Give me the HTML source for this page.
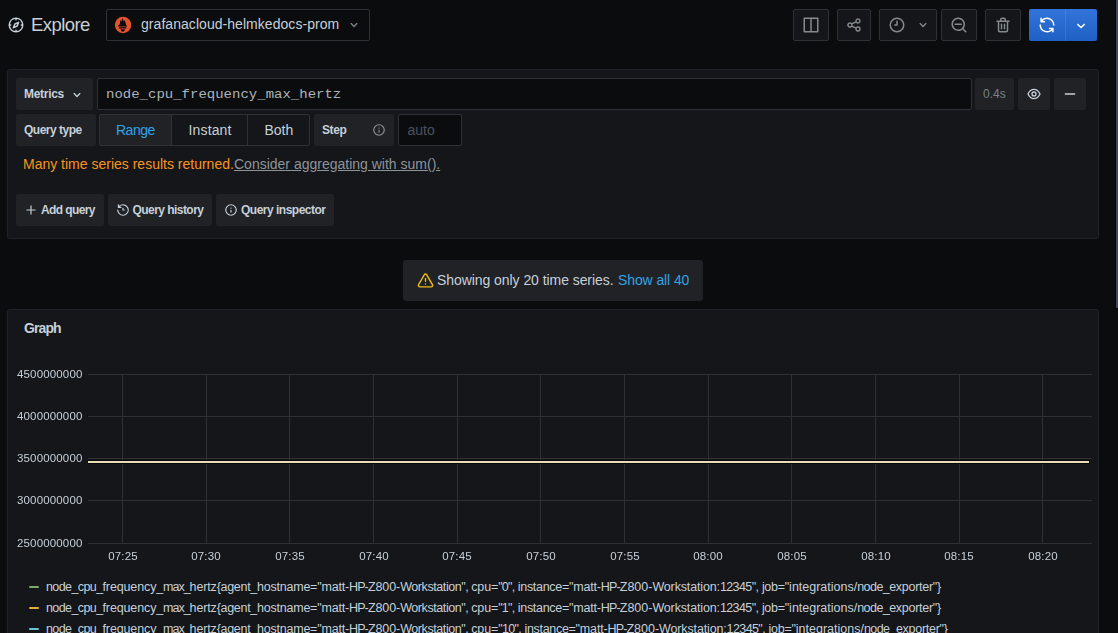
<!DOCTYPE html>
<html>
<head>
<meta charset="utf-8">
<title>Explore - Grafana</title>
<style>
*{box-sizing:border-box;margin:0;padding:0}
html,body{width:1118px;height:633px;overflow:hidden;background:#0b0c0e;color:#c7d0d9;font-family:"Liberation Sans",sans-serif;font-size:14px}
.abs{position:absolute}
#root{position:relative;width:1118px;height:633px;overflow:hidden}
.tbtn{position:absolute;top:9px;height:32px;background:#141619;border:1px solid #2f3135;border-radius:2px}
.panel{position:absolute;background:#141619;border:1px solid #202226;border-radius:3px}
.lbl{position:absolute;height:32px;background:#202226;border-radius:2px}
.inp{position:absolute;height:32px;background:#0b0c0e;border:1px solid #2c3235;border-radius:2px}
.txt{position:absolute;white-space:nowrap;line-height:1}
.b{font-weight:bold}
.ylab{position:absolute;left:10px;width:72.5px;text-align:right;font-size:11.5px;line-height:12px;color:#c7d0d9;white-space:nowrap;letter-spacing:0.15px;will-change:transform}
.xlab{position:absolute;top:550px;width:60px;text-align:center;font-size:11.5px;line-height:12px;color:#c7d0d9;white-space:nowrap;letter-spacing:0.1px;will-change:transform}
.leg{position:absolute;left:46px;width:910px;height:14px;font-size:12.5px;line-height:14px;color:#c7d0d9;white-space:pre}
.leg span{position:absolute;top:0}
.legm{position:absolute;left:29px;width:10px;height:2px;border-radius:1px}
</style>
</head>
<body>
<div id="root">

<!-- top bar -->
<svg class="abs" style="left:7px;top:16px" width="18" height="18" viewBox="0 0 24 24" fill="#c7d0d9"><path d="M12,2A10,10,0,1,0,22,12,10,10,0,0,0,12,2Zm1,17.93V19a1,1,0,0,0-2,0v.93A8,8,0,0,1,4.07,13H5a1,1,0,0,0,0-2H4.070A8,8,0,0,1,11,4.070V5a1,1,0,0,0,2,0V4.070A8,8,0,0,1,19.930,11H19a1,1,0,0,0,0,2h.930A8,8,0,0,1,13,19.930ZM15.140,7.550l-5,2.120a1,1,0,0,0-.520.520l-2.120,5a1,1,0,0,0,.210,1.100,1,1,0,0,0,.700.290.930.930,0,0,0,.390-.080l5-2.120a1,1,0,0,0,.520-.520l2.120-5a1,1,0,0,0-1.300-1.300Zm-2.490,5.100-2.280,1,1-2.280,2.270-1Z"/></svg>
<div class="txt" id="t-explore" style="left:31px;top:16px;font-size:18.5px;color:#c7d0d9;letter-spacing:-0.58px">Explore</div>
<div class="abs" style="left:106px;top:9px;width:264px;height:32px;background:#0b0c0e;border:1px solid #2c3235;border-radius:2px"></div>
<svg class="abs" style="left:108px;top:10px" width="30" height="30" viewBox="0 0 30 30">
<circle cx="15.05" cy="15.05" r="8.2" fill="#e6522c"/>
<g fill="#0b0c0e">
<path d="M10.2 16.5 L10.2 15.7 C10.9 15.3 11.8 14.8 12.0 13.6 C12.1 12.4 11.9 11.3 12.4 10.1 C12.7 10.9 12.9 11.4 13.3 11.8 C13.6 10.5 13.8 9.2 14.45 7.9 C15.1 9.2 15.3 10.4 15.6 11.6 C16.0 11.2 16.2 10.6 16.35 9.9 C17.0 11.0 17.6 12.0 17.7 13.2 C17.8 14.6 18.4 15.3 18.95 15.7 L18.95 16.5 Z"/>
<rect x="11.1" y="17.15" width="7.15" height="1.3"/>
<path d="M12.6 19.2 H17 C16.7 20.8 15.9 21.7 14.8 21.7 C13.7 21.7 12.900 20.800 12.600 19.200 Z"/>
</g>
</svg>
<div class="txt" id="t-ds" style="left:141px;top:17px;font-size:14px;color:#c7d0d9;letter-spacing:0.05px">grafanacloud-helmkedocs-prom</div>
<svg class="abs" style="left:345.5px;top:17px" width="16" height="16" viewBox="0 0 24 24" fill="#7f848b"><path d="M17,9.17a1,1,0,0,0-1.41,0L12,12.71,8.46,9.17a1,1,0,0,0-1.41,0,1,1,0,0,0,0,1.42l4.24,4.24a1,1,0,0,0,1.42,0L17,10.59A1,1,0,0,0,17,9.17Z"/></svg>
<!-- toolbar -->
<div class="tbtn" style="left:793px;width:36px"></div>
<div class="tbtn" style="left:837px;width:34px"></div>
<div class="tbtn" style="left:879px;width:58px"></div>
<div class="tbtn" style="left:941px;width:36px"></div>
<div class="tbtn" style="left:985px;width:36px"></div>
<svg class="abs" style="left:802px;top:16px" width="18" height="18" viewBox="0 0 24 24" fill="#858a90"><path d="M21,2H3A1,1,0,0,0,2,3V21a1,1,0,0,0,1,1H21a1,1,0,0,0,1-1V3A1,1,0,0,0,21,2ZM11,20H4V4h7Zm9,0H13V4h7Z"/></svg>
<svg class="abs" style="left:846px;top:17px" width="16" height="16" viewBox="0 0 24 24" fill="#858a90"><path d="M18,14a4,4,0,0,0-3.08,1.48l-5.1-2.35a3.64,3.64,0,0,0,0-2.26l5.1-2.35A4,4,0,1,0,14,6a4.17,4.17,0,0,0,.07.71L8.79,9.14a4,4,0,1,0,0,5.72l5.28,2.43A4.17,4.17,0,0,0,14,18a4,4,0,1,0,4-4ZM18,4a2,2,0,1,1-2,2A2,2,0,0,1,18,4ZM6,14a2,2,0,1,1,2-2A2,2,0,0,1,6,14Zm12,6a2,2,0,1,1,2-2A2,2,0,0,1,18,20Z"/></svg>
<svg class="abs" style="left:888px;top:16px" width="18" height="18" viewBox="0 0 24 24" fill="#858a90"><path d="M12,2A10,10,0,1,0,22,12,10.01,10.01,0,0,0,12,2Zm0,18a8,8,0,1,1,8-8A8.01,8.01,0,0,1,12,20ZM12,6a1,1,0,0,0-1,1v4H9a1,1,0,0,0,0,2h3a1,1,0,0,0,1-1V7A1,1,0,0,0,12,6Z"/></svg>
<svg class="abs" style="left:915px;top:17px" width="16" height="16" viewBox="0 0 24 24" fill="#858a90"><path d="M17,9.17a1,1,0,0,0-1.41,0L12,12.71,8.46,9.17a1,1,0,0,0-1.41,0,1,1,0,0,0,0,1.42l4.24,4.24a1,1,0,0,0,1.42,0L17,10.59A1,1,0,0,0,17,9.17Z"/></svg>
<svg class="abs" style="left:950px;top:16px" width="18" height="18" viewBox="0 0 24 24" fill="#858a90"><path d="M21.71,20.29,18,16.61A9,9,0,1,0,16.61,18l3.68,3.68a1,1,0,0,0,1.42,0A1,1,0,0,0,21.71,20.29ZM11,18a7,7,0,1,1,7-7A7,7,0,0,1,11,18Zm4-8H7a1,1,0,0,0,0,2h8a1,1,0,0,0,0-2Z"/></svg>
<svg class="abs" style="left:994px;top:16px" width="18" height="18" viewBox="0 0 24 24" fill="#858a90"><path d="M10,18a1,1,0,0,0,1-1V11a1,1,0,0,0-2,0v6A1,1,0,0,0,10,18ZM20,6H16V5a3,3,0,0,0-3-3H11A3,3,0,0,0,8,5V6H4A1,1,0,0,0,4,8H5V19a3,3,0,0,0,3,3h8a3,3,0,0,0,3-3V8h1a1,1,0,0,0,0-2ZM10,5a1,1,0,0,1,1-1h2a1,1,0,0,1,1,1V6H10Zm7,14a1,1,0,0,1-1,1H8a1,1,0,0,1-1-1V8H17Zm-3-1a1,1,0,0,0,1-1V11a1,1,0,0,0-2,0v6A1,1,0,0,0,14,18Z"/></svg>
<div class="abs" style="left:1029px;top:9px;width:68px;height:32px;border-radius:2px;background:linear-gradient(180deg,#3274d9 0%,#1f60c4 100%)"></div>
<div class="abs" style="left:1064.5px;top:9px;width:1.5px;height:32px;background:rgba(255,255,255,0.09)"></div>
<svg class="abs" style="left:1038px;top:16px" width="18" height="18" viewBox="0 0 24 24" fill="#ffffff"><path d="M19.91,15.51H15.38a1,1,0,0,0,0,2h2.4A8,8,0,0,1,4,12a1,1,0,0,0-2,0,10,10,0,0,0,16.88,7.23V21a1,1,0,0,0,2,0V16.5A1,1,0,0,0,19.91,15.51ZM12,2A10,10,0,0,0,5.12,4.77V3a1,1,0,0,0-2,0V7.5a1,1,0,0,0,1,1h4.5a1,1,0,0,0,0-2h-2.4A8,8,0,0,1,20,12a1,1,0,0,0,2,0A10,10,0,0,0,12,2Z"/></svg>
<svg class="abs" style="left:1072px;top:16.5px" width="18" height="18" viewBox="0 0 24 24" fill="#ffffff"><path d="M17,9.17a1,1,0,0,0-1.41,0L12,12.71,8.46,9.17a1,1,0,0,0-1.41,0,1,1,0,0,0,0,1.42l4.24,4.24a1,1,0,0,0,1.42,0L17,10.59A1,1,0,0,0,17,9.17Z"/></svg>
<!-- query panel -->
<div class="panel" style="left:7px;top:69px;width:1092px;height:170px"></div>
<div class="lbl" style="left:16px;top:78px;width:77px"></div>
<div class="txt" id="t-metrics" style="left:24px;top:88px;font-size:12px;color:#c7d0d9;font-weight:bold;letter-spacing:-0.3px">Metrics</div>
<svg class="abs" style="left:68.5px;top:86.5px" width="16" height="16" viewBox="0 0 24 24" fill="#c7d0d9"><path d="M17,9.17a1,1,0,0,0-1.41,0L12,12.71,8.46,9.17a1,1,0,0,0-1.41,0,1,1,0,0,0,0,1.42l4.24,4.24a1,1,0,0,0,1.42,0L17,10.59A1,1,0,0,0,17,9.17Z"/></svg>
<div class="inp" style="left:97px;top:78px;width:875px"></div>
<div class="txt" id="t-query" style="left:106px;top:87px;font-size:14px;color:#adb4bc;font-family:'Liberation Mono',monospace;transform:scaleY(0.86);transform-origin:0 10.9px">node_cpu_frequency_max_hertz</div>
<div class="lbl" style="left:975px;top:78px;width:39px"></div>
<div class="txt" id="t-04s" style="left:983px;top:88px;font-size:12px;color:#7b8087;">0.4s</div>
<div class="lbl" style="left:1018px;top:78px;width:32px"></div>
<svg class="abs" style="left:1026px;top:86px" width="16" height="16" viewBox="0 0 24 24" fill="#c7d0d9"><path d="M21.92,11.6C19.9,6.91,16.1,4,12,4S4.1,6.91,2.08,11.6a1,1,0,0,0,0,.8C4.1,17.09,7.9,20,12,20s7.900-2.910,9.920-7.600A1,1,0,0,0,21.920,11.600ZM12,18c-3.170,0-6.170-2.290-7.900-6C5.830,8.290,8.830,6,12,6s6.170,2.290,7.900,6C18.170,15.710,15.170,18,12,18ZM12,8a4,4,0,1,0,4,4A4,4,0,0,0,12,8Zm0,6a2,2,0,1,1,2-2A2,2,0,0,1,12,14Z"/></svg>
<div class="lbl" style="left:1054px;top:78px;width:32px"></div>
<svg class="abs" style="left:1062px;top:86px" width="16" height="16" viewBox="0 0 24 24" fill="#c7d0d9"><path d="M19,11H5a1,1,0,0,0,0,2H19a1,1,0,0,0,0-2Z"/></svg>
<div class="lbl" style="left:16px;top:114px;width:80px"></div>
<div class="txt" id="t-qtype" style="left:24px;top:124px;font-size:12px;color:#c7d0d9;font-weight:bold;letter-spacing:-0.5px">Query type</div>
<div class="abs" style="left:99px;top:114px;width:211px;height:32px;background:#141619;border:1px solid #2c3235;border-radius:2px"></div>
<div class="abs" style="left:100px;top:115px;width:71px;height:30px;background:#202226"></div>
<div class="abs" style="left:171px;top:115px;width:1px;height:30px;background:#2c3235"></div>
<div class="abs" style="left:247px;top:115px;width:1px;height:30px;background:#2c3235"></div>
<div class="txt" id="t-range" style="left:116px;top:123px;font-size:14px;color:#33a2e5;letter-spacing:-0.5px">Range</div>
<div class="txt" id="t-instant" style="left:188.5px;top:123px;font-size:14px;color:#c7d0d9;letter-spacing:0.15px">Instant</div>
<div class="txt" id="t-both" style="left:264.5px;top:123px;font-size:14px;color:#c7d0d9;">Both</div>
<div class="lbl" style="left:314px;top:114px;width:80px"></div>
<div class="txt" id="t-step" style="left:322px;top:124px;font-size:12px;color:#c7d0d9;font-weight:bold;letter-spacing:-0.4px">Step</div>
<svg class="abs" style="left:371.5px;top:123px" width="14" height="14" viewBox="0 0 24 24" fill="#8e949b"><path d="M12,2A10,10,0,1,0,22,12,10.01,10.01,0,0,0,12,2Zm0,18a8,8,0,1,1,8-8A8.01,8.01,0,0,1,12,20Zm0-8.5a1,1,0,0,0-1,1v3a1,1,0,0,0,2,0v-3A1,1,0,0,0,12,11.5Zm0-4a1.25,1.25,0,1,0,1.25,1.25A1.25,1.25,0,0,0,12,7.5Z"/></svg>
<div class="inp" style="left:398px;top:114px;width:64px"></div>
<div class="txt" id="t-auto" style="left:407.5px;top:123px;font-size:14px;color:#4a525e;">auto</div>
<div class="txt" id="t-many" style="left:23px;top:157px;font-size:14px;color:#f79520;">Many time series results returned.</div>
<div class="txt" id="t-consider" style="left:234px;top:157px;font-size:14px;color:#8e949b;text-decoration:underline">Consider aggregating with sum().</div>
<div class="lbl" style="left:16px;top:194px;width:88px"></div>
<svg class="abs" style="left:24px;top:203px" width="14" height="14" viewBox="0 0 24 24" fill="#c7d0d9"><path d="M19,11H13V5a1,1,0,0,0-2,0v6H5a1,1,0,0,0,0,2h6v6a1,1,0,0,0,2,0V13h6a1,1,0,0,0,0-2Z"/></svg>
<div class="txt" id="t-add" style="left:41px;top:204px;font-size:12px;color:#c7d0d9;font-weight:bold;letter-spacing:-0.6px">Add query</div>
<div class="lbl" style="left:108px;top:194px;width:104px"></div>
<svg class="abs" style="left:116px;top:202.5px" width="14" height="14" viewBox="0 0 24 24" fill="#c7d0d9"><path d="M12,2A10,10,0,0,0,5.12,4.77V3a1,1,0,0,0-2,0V7.5a1,1,0,0,0,1,1H8.62a1,1,0,0,0,0-2H6.22A8,8,0,1,1,4,12a1,1,0,0,0-2,0A10,10,0,1,0,12,2Zm0,6a1,1,0,0,0-1,1v3a1,1,0,0,0,1,1h2a1,1,0,0,0,0-2H13V9A1,1,0,0,0,12,8Z"/></svg>
<div class="txt" id="t-hist" style="left:132.5px;top:204px;font-size:12px;color:#c7d0d9;font-weight:bold;letter-spacing:-0.55px">Query history</div>
<div class="lbl" style="left:216px;top:194px;width:118px"></div>
<svg class="abs" style="left:224px;top:202.5px" width="14" height="14" viewBox="0 0 24 24" fill="#c7d0d9"><path d="M12,2A10,10,0,1,0,22,12,10.01,10.01,0,0,0,12,2Zm0,18a8,8,0,1,1,8-8A8.01,8.01,0,0,1,12,20Zm0-8.5a1,1,0,0,0-1,1v3a1,1,0,0,0,2,0v-3A1,1,0,0,0,12,11.5Zm0-4a1.25,1.25,0,1,0,1.25,1.25A1.25,1.25,0,0,0,12,7.5Z"/></svg>
<div class="txt" id="t-insp" style="left:241px;top:204px;font-size:12px;color:#c7d0d9;font-weight:bold;letter-spacing:-0.5px">Query inspector</div>
<!-- alert -->
<div class="abs" style="left:403px;top:260px;width:300px;height:41px;background:#202226;border-radius:3px"></div>
<svg class="abs" style="left:416.5px;top:271.5px" width="17" height="17" viewBox="0 0 24 24" fill="#ecbb13"><path d="M12,16a1,1,0,1,0,1,1A1,1,0,0,0,12,16Zm10.67,1.47-8.05-14a3,3,0,0,0-5.24,0l-8,14A3,3,0,0,0,3.94,22H20.060a3,3,0,0,0,2.610-4.530Zm-1.730,2a1,1,0,0,1-.880.510H3.940a1,1,0,0,1-.880-.510,1,1,0,0,1,0-1l8-14a1,1,0,0,1,1.780,0l8.050,14A1,1,0,0,1,20.940,19.490ZM12,8a1,1,0,0,0-1,1v4a1,1,0,0,0,2,0V9A1,1,0,0,0,12,8Z"/></svg>
<div class="txt" id="t-show" style="left:437px;top:273px;font-size:14px;color:#c7d0d9;letter-spacing:-0.06px">Showing only 20 time series.</div>
<div class="txt" id="t-showall" style="left:618px;top:273px;font-size:14px;color:#33a2e5;letter-spacing:-0.1px">Show all 40</div>
<!-- graph panel -->
<div class="panel" style="left:7px;top:309px;width:1092px;height:340px"></div>
<div class="txt" id="t-graph" style="left:24px;top:321px;font-size:14px;color:#c7d0d9;font-weight:bold;letter-spacing:-0.9px">Graph</div>
<svg class="abs" style="left:0;top:0" width="1118" height="633" shape-rendering="crispEdges"><g stroke="#2e3034" stroke-width="1"><line x1="88" x2="1092" y1="374.5" y2="374.5"/><line x1="88" x2="1092" y1="416.5" y2="416.5"/><line x1="88" x2="1092" y1="458.5" y2="458.5"/><line x1="88" x2="1092" y1="500.5" y2="500.5"/><line x1="88" x2="1092" y1="543.5" y2="543.5"/><line x1="122.5" x2="122.5" y1="374" y2="544"/><line x1="206.5" x2="206.5" y1="374" y2="544"/><line x1="289.5" x2="289.5" y1="374" y2="544"/><line x1="373.5" x2="373.5" y1="374" y2="544"/><line x1="457.5" x2="457.5" y1="374" y2="544"/><line x1="540.5" x2="540.5" y1="374" y2="544"/><line x1="624.5" x2="624.5" y1="374" y2="544"/><line x1="708.5" x2="708.5" y1="374" y2="544"/><line x1="791.5" x2="791.5" y1="374" y2="544"/><line x1="875.5" x2="875.5" y1="374" y2="544"/><line x1="959.5" x2="959.5" y1="374" y2="544"/><line x1="1042.5" x2="1042.5" y1="374" y2="544"/></g><rect x="88" y="460" width="1002" height="4" fill="#08090b"/><rect x="88" y="461" width="1001" height="2" fill="#e9ddb8"/></svg>
<div class="ylab" style="top:368px">4500000000</div>
<div class="ylab" style="top:410px">4000000000</div>
<div class="ylab" style="top:452px">3500000000</div>
<div class="ylab" style="top:494px">3000000000</div>
<div class="ylab" style="top:537px">2500000000</div>
<div class="xlab" style="left:92.6px">07:25</div>
<div class="xlab" style="left:176.3px">07:30</div>
<div class="xlab" style="left:259.9px">07:35</div>
<div class="xlab" style="left:343.6px">07:40</div>
<div class="xlab" style="left:427.3px">07:45</div>
<div class="xlab" style="left:510.9px">07:50</div>
<div class="xlab" style="left:594.6px">07:55</div>
<div class="xlab" style="left:678.3px">08:00</div>
<div class="xlab" style="left:761.9px">08:05</div>
<div class="xlab" style="left:845.6px">08:10</div>
<div class="xlab" style="left:929.3px">08:15</div>
<div class="xlab" style="left:1012.9px">08:20</div>
<div class="legm" style="top:586px;background:#77a967"></div>
<div class="leg" id="leg0" style="top:579.5px"><span style="left:-0.10px;letter-spacing:-0.573px">node_</span><span style="left:31.80px;letter-spacing:-0.602px">cpu_</span><span style="left:56.50px;letter-spacing:-0.126px">frequency_</span><span style="left:117.10px;letter-spacing:-1.020px">max_</span><span style="left:143.60px;letter-spacing:-0.139px">hertz</span><span style="left:170.70px;letter-spacing:-0.303px">{agent_</span><span style="left:211.00px;letter-spacing:-0.223px">hostname=</span><span style="left:271.20px;letter-spacing:-0.187px">"matt-</span><span style="left:303.00px;letter-spacing:-0.877px">HP-</span><span style="left:321.90px;letter-spacing:-0.071px">Z800-</span><span style="left:354.20px;letter-spacing:-0.422px">Workstation",</span><span style="left:425.20px;letter-spacing:-0.117px">cpu=</span><span style="left:452.20px;letter-spacing:-0.778px">"0",</span><span style="left:471.80px;letter-spacing:-0.307px">instance=</span><span style="left:522.90px;letter-spacing:-0.170px">"matt-</span><span style="left:554.80px;letter-spacing:-0.844px">HP-</span><span style="left:573.80px;letter-spacing:-0.011px">Z800-</span><span style="left:606.40px;letter-spacing:-0.146px">Workstation:</span><span style="left:673.90px;letter-spacing:-0.596px">12345",</span><span style="left:715.90px;letter-spacing:-0.296px">job=</span><span style="left:738.70px;letter-spacing:-0.003px">"integrations/</span><span style="left:811.20px;letter-spacing:-0.553px">node_</span><span style="left:843.20px;letter-spacing:-0.277px">exporter"}</span></div>
<div class="legm" style="top:607px;background:#dfae38"></div>
<div class="leg" id="leg1" style="top:600.5px"><span style="left:-0.10px;letter-spacing:-0.573px">node_</span><span style="left:31.80px;letter-spacing:-0.602px">cpu_</span><span style="left:56.50px;letter-spacing:-0.126px">frequency_</span><span style="left:117.10px;letter-spacing:-1.020px">max_</span><span style="left:143.60px;letter-spacing:-0.139px">hertz</span><span style="left:170.70px;letter-spacing:-0.303px">{agent_</span><span style="left:211.00px;letter-spacing:-0.223px">hostname=</span><span style="left:271.20px;letter-spacing:-0.187px">"matt-</span><span style="left:303.00px;letter-spacing:-0.877px">HP-</span><span style="left:321.90px;letter-spacing:-0.071px">Z800-</span><span style="left:354.20px;letter-spacing:-0.422px">Workstation",</span><span style="left:425.20px;letter-spacing:-0.117px">cpu=</span><span style="left:452.20px;letter-spacing:-0.778px">"1",</span><span style="left:471.80px;letter-spacing:-0.307px">instance=</span><span style="left:522.90px;letter-spacing:-0.170px">"matt-</span><span style="left:554.80px;letter-spacing:-0.844px">HP-</span><span style="left:573.80px;letter-spacing:-0.011px">Z800-</span><span style="left:606.40px;letter-spacing:-0.146px">Workstation:</span><span style="left:673.90px;letter-spacing:-0.596px">12345",</span><span style="left:715.90px;letter-spacing:-0.296px">job=</span><span style="left:738.70px;letter-spacing:-0.003px">"integrations/</span><span style="left:811.20px;letter-spacing:-0.553px">node_</span><span style="left:843.20px;letter-spacing:-0.277px">exporter"}</span></div>
<div class="legm" style="top:628px;background:#68c5d4"></div>
<div class="leg" id="leg2" style="top:621.5px"><span style="left:-0.10px;letter-spacing:-0.573px">node_</span><span style="left:31.80px;letter-spacing:-0.602px">cpu_</span><span style="left:56.50px;letter-spacing:-0.126px">frequency_</span><span style="left:117.10px;letter-spacing:-1.020px">max_</span><span style="left:143.60px;letter-spacing:-0.139px">hertz</span><span style="left:170.70px;letter-spacing:-0.303px">{agent_</span><span style="left:211.00px;letter-spacing:-0.223px">hostname=</span><span style="left:271.20px;letter-spacing:-0.187px">"matt-</span><span style="left:303.00px;letter-spacing:-0.877px">HP-</span><span style="left:321.90px;letter-spacing:-0.071px">Z800-</span><span style="left:354.20px;letter-spacing:-0.422px">Workstation",</span><span style="left:425.20px;letter-spacing:-0.117px">cpu=</span><span style="left:452.20px;letter-spacing:-0.673px">"10",</span><span style="left:478.50px;letter-spacing:-0.307px">instance=</span><span style="left:529.60px;letter-spacing:-0.170px">"matt-</span><span style="left:561.50px;letter-spacing:-0.844px">HP-</span><span style="left:580.50px;letter-spacing:-0.011px">Z800-</span><span style="left:613.10px;letter-spacing:-0.146px">Workstation:</span><span style="left:680.60px;letter-spacing:-0.596px">12345",</span><span style="left:722.60px;letter-spacing:-0.296px">job=</span><span style="left:745.40px;letter-spacing:-0.003px">"integrations/</span><span style="left:817.90px;letter-spacing:-0.553px">node_</span><span style="left:849.90px;letter-spacing:-0.277px">exporter"}</span></div>
<!-- scrollbar -->
<div class="abs" style="left:1115px;top:0;width:3px;height:309px;background:#45475a;border-left:1px solid #050506;border-bottom:1px solid #050506"></div>
</div>
</body>
</html>
